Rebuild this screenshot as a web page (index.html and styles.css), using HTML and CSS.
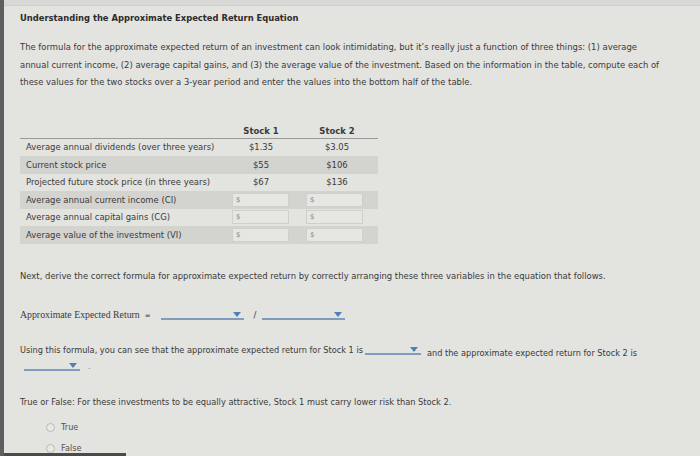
FILE: index.html
```html
<!DOCTYPE html>
<html>
<head>
<meta charset="utf-8">
<link rel="stylesheet" href="styles.css">
</head>
<body>
<div class="page">
  <div class="topstrip"></div>
  <div class="content">
    <h1 class="title">Understanding the Approximate Expected Return Equation</h1>
    <p class="intro">The formula for the approximate expected return of an investment can look intimidating, but it’s really just a function of three things: (1) average annual current income, (2) average capital gains, and (3) the average value of the investment. Based on the information in the table, compute each of these values for the two stocks over a 3-year period and enter the values into the bottom half of the table.</p>

    <div class="table">
      <div class="row head">
        <div class="lbl"></div>
        <div class="c1">Stock 1</div>
        <div class="c2">Stock 2</div>
      </div>
      <div class="row">
        <div class="lbl">Average annual dividends (over three years)</div>
        <div class="c1">$1.35</div>
        <div class="c2">$3.05</div>
      </div>
      <div class="row shade">
        <div class="lbl">Current stock price</div>
        <div class="c1">$55</div>
        <div class="c2">$106</div>
      </div>
      <div class="row">
        <div class="lbl">Projected future stock price (in three years)</div>
        <div class="c1">$67</div>
        <div class="c2">$136</div>
      </div>
      <div class="row shade">
        <div class="lbl">Average annual current income (CI)</div>
        <div class="c1 in"><span class="box">$</span></div>
        <div class="c2 in"><span class="box">$</span></div>
      </div>
      <div class="row">
        <div class="lbl">Average annual capital gains (CG)</div>
        <div class="c1 in"><span class="box">$</span></div>
        <div class="c2 in"><span class="box">$</span></div>
      </div>
      <div class="row shade">
        <div class="lbl">Average value of the investment (VI)</div>
        <div class="c1 in"><span class="box">$</span></div>
        <div class="c2 in"><span class="box">$</span></div>
      </div>
    </div>

    <p class="next">Next, derive the correct formula for approximate expected return by correctly arranging these three variables in the equation that follows.</p>

    <div class="formula">
      <span class="serif">Approximate Expected Return</span>
      <span class="eq">=</span>
      <span class="dd wide"><span class="arrow"></span></span>
      <span class="slash">/</span>
      <span class="dd wide"><span class="arrow"></span></span>
    </div>

    <div class="using">
      <div class="line1">
        <span>Using this formula, you can see that the approximate expected return for Stock 1 is</span>
        <span class="dd small"><span class="arrow"></span></span>
        <span class="after">and the approximate expected return for Stock 2 is</span>
      </div>
      <div class="line2">
        <span class="dd small"><span class="arrow"></span></span>
        <span class="dot">.</span>
      </div>
    </div>

    <p class="tf">True or False: For these investments to be equally attractive, Stock 1 must carry lower risk than Stock 2.</p>
    <div class="radios">
      <div class="radio"><span class="circle"></span><span>True</span></div>
      <div class="radio"><span class="circle"></span><span>False</span></div>
    </div>
  </div>
  <div class="bottombar"></div>
</div>
</body>
</html>
```

FILE: styles.css
```css
* { box-sizing: border-box; }
html, body {
  margin: 0;
  padding: 0;
  width: 700px;
  height: 456px;
  overflow: hidden;
  background: #e3e3e0;
}
.page {
  width: 700px;
  height: 456px;
  border-left: 4px solid #5f5f5f;
  position: relative;
  font-family: "DejaVu Sans", Verdana, sans-serif;
  color: #3a3a3a;
  font-size: 8.45px;
  overflow: hidden;
}
.topstrip {
  height: 6px;
  background: #d9d9d7;
  border-bottom: 1px solid #cfcfcc;
}
.content {
  padding: 0 0 0 16px;
}
.title {
  margin: 6px 0 0 0;
  font-size: 8.4px;
  font-weight: bold;
  color: #2c2c2c;
  line-height: 12px;
}
.intro {
  margin: 15px 0 0 0;
  width: 645px;
  line-height: 17.5px;
}
.table {
  margin-top: 31px;
  width: 358px;
}
.row {
  display: grid;
  grid-template-columns: 210px 70px 78px;
  height: 17.5px;
  align-items: center;
}
.row.head {
  height: 16px;
  font-weight: bold;
  border-bottom: 1px solid #9a9a98;
  align-items: end;
  padding-bottom: 2px;
}
.row.shade { background: #d3d3d0; }
.lbl { padding-left: 6px; white-space: nowrap; }
.c1, .c2 { text-align: center; }
.c1 { padding-right: 8px; }
.c2 { padding-right: 4px; }
.in { text-align: left; padding: 0; }
.box {
  display: block;
  height: 14px;
  width: 57px;
  border: 1px solid #cfcfcc;
  background: #e6e6e3;
  color: #888;
  font-size: 7px;
  line-height: 12px;
  padding-left: 3px;
  margin-left: 2px;
}
.c2.in .box { margin-left: 6px; }
.next {
  margin: 27px 0 0 0;
}
.formula {
  margin-top: 25px;
  display: flex;
  align-items: flex-end;
  height: 14px;
}
.serif {
  font-family: "Liberation Serif", "Times New Roman", serif;
  font-size: 9.8px;
  color: #3a3a3a;
}
.eq { margin-left: 5px; font-size: 7px; }
.dd {
  display: inline-block;
  position: relative;
  height: 11px;
  border-bottom: 2px solid #7f9cbc;
}
.dd.wide { width: 83px; margin-left: 10px; }
.slash { margin-left: 10px; margin-right: -4px; }
.arrow {
  position: absolute;
  right: 3px;
  top: 3px;
  width: 0;
  height: 0;
  border-left: 4px solid transparent;
  border-right: 4px solid transparent;
  border-top: 5px solid #4d7fb8;
}
.using { margin-top: 24px; font-size: 8.2px; }
.line1 { display: flex; align-items: flex-end; white-space: nowrap; }
.dd.small { width: 56px; margin-left: 2px; }
.after { margin-left: 6px; position: relative; top: 3px; }
.line2 {
  display: flex;
  align-items: flex-end;
  margin-top: 5px;
  padding-left: 2px;
}
.dot { margin-left: 8px; color: #888; }
.tf { margin: 26px 0 0 0; font-size: 8.25px; }
.radios { margin-top: 10px; padding-left: 26px; font-size: 8.2px; }
.radio {
  display: flex;
  align-items: center;
  height: 21px;
  color: #555;
}
.circle {
  width: 9px;
  height: 9px;
  border-radius: 50%;
  border: 1px solid #b9b9b6;
  background: #e8e8e5;
  margin-right: 6px;
}
.bottombar {
  position: absolute;
  left: 0;
  bottom: 0;
  width: 122px;
  height: 3px;
  background: #4a4a4a;
}
```
